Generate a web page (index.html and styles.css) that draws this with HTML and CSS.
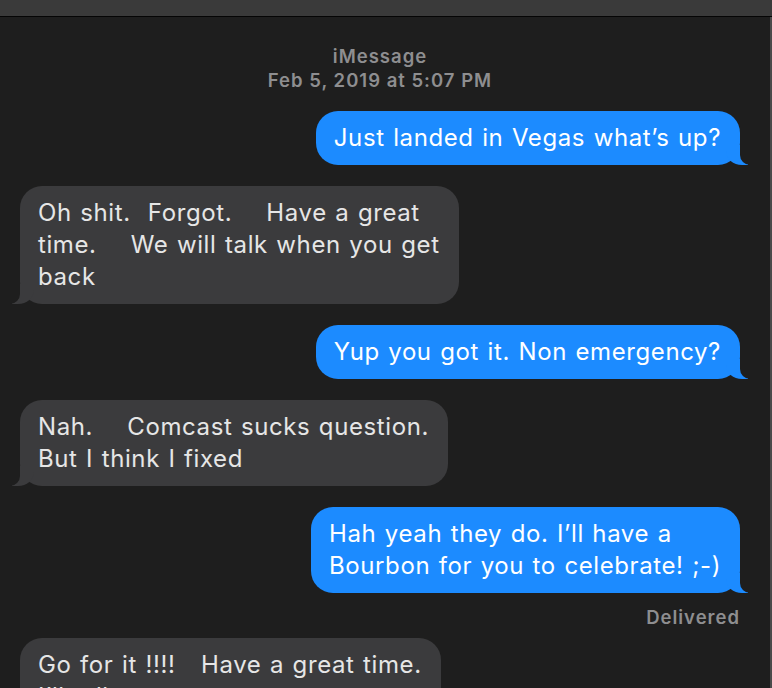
FILE: index.html
```html
<!DOCTYPE html>
<html lang="en">
<head>
<meta charset="utf-8">
<title>Messages</title>
<link rel="stylesheet" href="styles.css">
</head>
<body>
<div class="window">
  <div class="titlebar"></div>
  <div class="body">
    <main class="chat">
      <header class="chat-header">
        <div class="service">iMessage</div>
        <div class="timestamp">Feb 5, 2019 at 5:07 PM</div>
      </header>
      <div class="msg sent first"><div class="bubble">Just landed in Vegas what’s up?</div></div>
      <div class="msg recv"><div class="bubble">Oh shit.  Forgot.    Have a great
time.    We will talk when you get
back</div></div>
      <div class="msg sent"><div class="bubble">Yup you got it. Non emergency?</div></div>
      <div class="msg recv"><div class="bubble">Nah.    Comcast sucks question.
But I think I fixed</div></div>
      <div class="msg sent"><div class="bubble">Hah yeah they do. I’ll have a
Bourbon for you to celebrate! ;-)</div></div>
      <div class="status">Delivered</div>
      <div class="msg recv last"><div class="bubble">Go for it !!!!   Have a great time.
I’ll talk to you soon.</div></div>
    </main>
    <div class="scrollbar"></div>
  </div>
</div>
</body>
</html>
```

FILE: styles.css
```css
html, body {
  margin: 0;
  padding: 0;
  height: 100%;
  background: #1e1e1e;
  overflow: hidden;
}

.window {
  display: flex;
  flex-direction: column;
  height: 688px;
  width: 772px;
  font-family: "Inter", "Noto Sans", sans-serif;
}

.titlebar {
  height: 16px;
  flex: none;
  background: #3a3a3a;
  border-bottom: 1px solid #050505;
}

.body {
  flex: 1;
  display: flex;
  min-height: 0;
}

.chat {
  flex: 1;
  display: flex;
  flex-direction: column;
  padding: 27px 30px 0 20px;
  overflow: hidden;
}

.scrollbar {
  width: 2px;
  flex: none;
  background: #4a4a4a;
}

.chat-header {
  text-align: center;
  color: #8e8e90;
  font-size: 18.5px;
  font-weight: 600;
  letter-spacing: 1px;
  line-height: 24px;
}

.msg {
  display: flex;
  margin-top: 21px;
}

.msg.first {
  margin-top: 19px;
}

.msg.sent {
  justify-content: flex-end;
}

.msg.recv {
  justify-content: flex-start;
}

.bubble {
  position: relative;
  z-index: 0;
  white-space: pre;
  font-size: 24px;
  letter-spacing: 0.6px;
  word-spacing: 1.2px;
  line-height: 32px;
  padding: 11px 19px 11px 18px;
  border-radius: 22px;
}

.sent .bubble {
  background: #1c8bff;
  color: #ffffff;
}

.recv .bubble {
  background: #3b3b3d;
  color: #e6e6e6;
}

.bubble::before,
.bubble::after {
  content: "";
  position: absolute;
  bottom: 0;
  height: 20px;
  z-index: -1;
}

.sent .bubble::before {
  right: -8px;
  width: 22px;
  background: #1c8bff;
  border-bottom-left-radius: 16px 14px;
}

.sent .bubble::after {
  right: -26px;
  width: 26px;
  background: #1e1e1e;
  border-bottom-left-radius: 10px;
}

.recv .bubble::before {
  left: -8px;
  width: 22px;
  background: #3b3b3d;
  border-bottom-right-radius: 16px 14px;
}

.recv .bubble::after {
  left: -26px;
  width: 26px;
  background: #1e1e1e;
  border-bottom-right-radius: 10px;
}

.status {
  align-self: flex-end;
  margin-top: 12px;
  color: #8e8e90;
  font-size: 18.5px;
  font-weight: 600;
  letter-spacing: 1px;
  line-height: 24px;
}

.msg.last {
  margin-top: 9px;
}
```
